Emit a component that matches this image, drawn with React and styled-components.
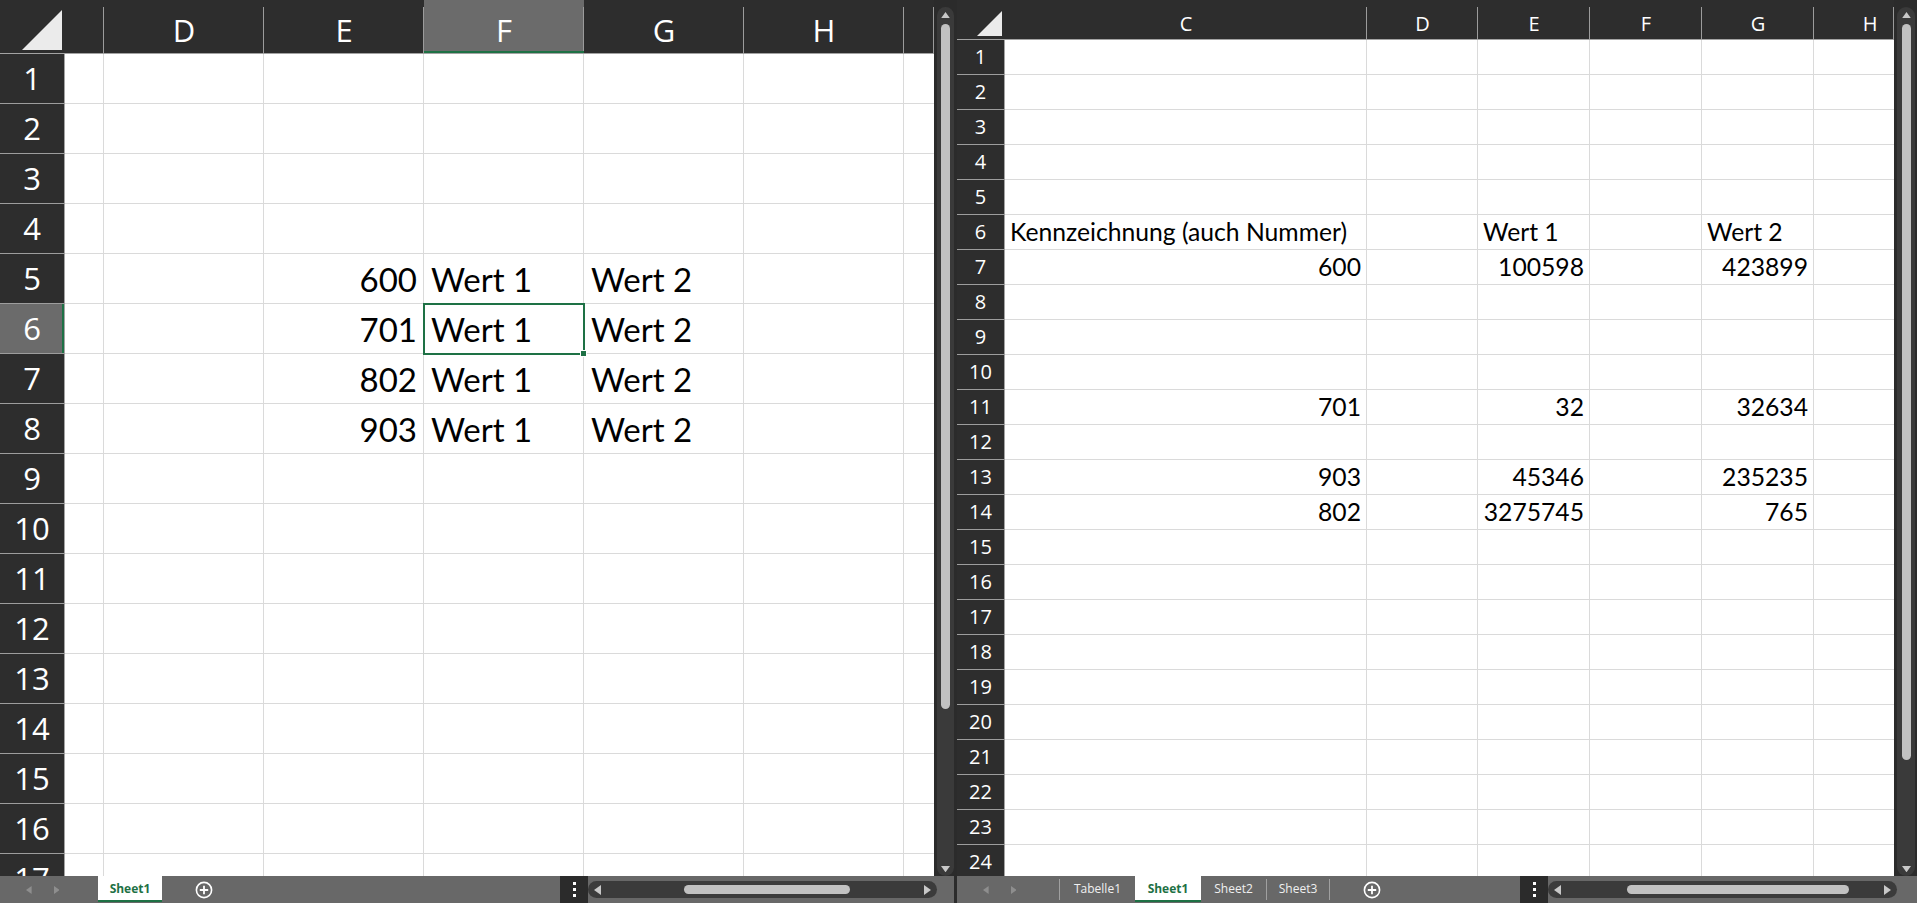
import React from "react"
import styled, { createGlobalStyle, css } from "styled-components"

const GREEN = "#1e7145"
const GRID = "#dadada"
const HEAD = "#2d2d2d"
const HEAD_LINE = "#a3a3a3"
const ACTIVE_HEAD = "#6b6b6b"
const CELL_FONT = `"Lato", "Liberation Sans", sans-serif`
const UI_FONT = `"Open Sans", "Noto Sans", "Liberation Sans", sans-serif`

const GlobalStyle = createGlobalStyle`
  html, body {
    margin: 0;
    padding: 0;
    background: #2b2b2b;
    overflow: hidden;
  }
`

const Window = styled.div`
  display: flex;
  gap: 3px;
  width: 1917px;
  height: 903px;
  background: #2b2b2b;
`

const Pane = styled.section`
  display: flex;
  flex-direction: column;
  flex: none;
  width: ${p => p.$width}px;
  min-height: 0;
`

const PaneBody = styled.div`
  flex: 1;
  display: flex;
  min-height: 0;
`

const Viewport = styled.div`
  flex: 1;
  overflow: hidden;
  background: #fff;
`

const Grid = styled.div`
  display: grid;
  grid-template-columns: ${p => p.$columns};
  grid-template-rows: ${p => p.$rows};
`

const Corner = styled.div`
  display: flex;
  align-items: flex-end;
  justify-content: flex-end;
  padding: 0 3px 3px 0;
  background: ${HEAD};
  border-bottom: 1px solid ${HEAD_LINE};
  box-sizing: border-box;
`

const ColHeader = styled.div`
  display: flex;
  overflow: hidden;
  justify-content: flex-start;
  align-items: center;
  box-sizing: border-box;
  padding-top: ${p => p.$cfg.headPadTop}px;
  background-color: ${p => (p.$active ? ACTIVE_HEAD : HEAD)};
  background-image: linear-gradient(#9b9b9b, #9b9b9b);
  background-size: 1px calc(100% - 7px);
  background-position: right bottom;
  background-repeat: no-repeat;
  border-bottom: 1px solid ${HEAD_LINE};
  box-shadow: ${p => (p.$active ? `inset 0 -2px 0 ${GREEN}` : "none")};
  color: #fff;
  font-family: ${UI_FONT};
  font-size: ${p => p.$cfg.headFont}px;
  line-height: 1;
`

const ColLabel = styled.span`
  flex: none;
  width: ${p => p.$width}px;
  text-align: center;
`

const RowHeader = styled.div`
  display: flex;
  align-items: center;
  justify-content: center;
  box-sizing: border-box;
  background: ${p => (p.$active ? ACTIVE_HEAD : HEAD)};
  border-right: 1px solid ${HEAD_LINE};
  border-bottom: 1px solid #9d9d9d;
  box-shadow: ${p => (p.$active ? `inset -2px 0 0 ${GREEN}` : "none")};
  color: #fff;
  font-family: ${UI_FONT};
  font-size: ${p => p.$cfg.headFont}px;
  line-height: 1;
`

const Cell = styled.div`
  display: flex;
  align-items: flex-end;
  justify-content: ${p => (p.$align === "right" ? "flex-end" : "flex-start")};
  box-sizing: border-box;
  padding: 0 ${p => p.$cfg.padR}px ${p => p.$cfg.padB}px ${p => p.$cfg.padL}px;
  border-right: ${p => (p.$clip === "right" ? "none" : `1px solid ${GRID}`)};
  border-bottom: 1px solid ${GRID};
  color: #000;
  font-family: ${CELL_FONT};
  font-size: ${p => p.$cfg.cellFont}px;
  line-height: 1;
  white-space: nowrap;

  ${p =>
    p.$selected &&
    css`
      position: relative;
      z-index: 1;
      outline: 2px solid ${GREEN};
      outline-offset: -1px;

      &::after {
        content: "";
        position: absolute;
        right: -4px;
        bottom: -4px;
        width: 5px;
        height: 5px;
        background: ${GREEN};
        border: 1px solid #fff;
      }
    `}
`

const VScroll = styled.div`
  flex: none;
  display: flex;
  box-sizing: border-box;
  width: ${p => p.$width}px;
  padding: 7px ${p => p.$padRight}px 0 3px;
  background: #2b2b2b;
`

const VTrack = styled.div`
  flex: 1;
  display: flex;
  flex-direction: column;
  align-items: center;
  padding: 5px 0 4px;
  background: #3a3a3a;
  border-radius: 9px;
`

const VThumb = styled.div`
  width: 9px;
  height: ${p => p.$size}px;
  margin-top: 6px;
  border-radius: 5px;
  background: #c1c1c1;
`

const Filler = styled.div`
  flex: 1;
`

const BottomBar = styled.div`
  flex: none;
  display: flex;
  align-items: flex-start;
  height: 27px;
  background: #686868;
  font-family: ${UI_FONT};
  font-size: 12px;
`

const NavArrows = styled.div`
  flex: none;
  display: flex;
  align-items: center;
  gap: 22px;
  box-sizing: border-box;
  width: ${p => p.$width}px;
  height: 27px;
  padding-left: 26px;
`

const TabSep = styled.span`
  flex: none;
  width: 1px;
  height: 21px;
  margin-top: 3px;
  background: #a0a0a0;
`

const Tab = styled.div`
  flex: none;
  display: flex;
  align-items: center;
  justify-content: center;
  box-sizing: border-box;
  width: ${p => p.$width}px;
  height: 24px;
  color: ${p => (p.$active ? GREEN : "#f0f0f0")};
  font-weight: ${p => (p.$active ? 700 : 400)};
  ${p =>
    p.$active &&
    css`
      height: 26px;
      background: #fff;
      border-bottom: 2px solid ${GREEN};
    `}
`

const AddSheet = styled.div`
  flex: none;
  display: flex;
  align-items: center;
  height: 27px;
  margin-left: ${p => p.$offset}px;
`

const DotsButton = styled.div`
  flex: none;
  display: flex;
  flex-direction: column;
  align-items: center;
  justify-content: center;
  gap: 3px;
  width: 28px;
  height: 27px;
  background: #2b2b2b;

  span {
    width: 3px;
    height: 3px;
    background: #fff;
  }
`

const HTrack = styled.div`
  flex: none;
  display: flex;
  align-items: center;
  box-sizing: border-box;
  width: 349px;
  height: 17px;
  margin-top: 5px;
  padding: 0 6px;
  background: #3b3b3b;
  border-radius: 9px;
`

const HThumb = styled.div`
  flex: none;
  width: ${p => p.$size}px;
  height: 9px;
  margin-left: ${p => p.$offset}px;
  border-radius: 5px;
  background: #c1c1c1;
`

const EndGap = styled.div`
  flex: none;
  width: ${p => p.$width}px;
`

const Triangle = ({ dir, size = 8, color = "#c8c8c8" }) => {
  const pts = {
    up: `0,${size * 0.7} ${size},${size * 0.7} ${size / 2},0`,
    down: `0,0 ${size},0 ${size / 2},${size * 0.7}`,
    left: `${size * 0.7},0 ${size * 0.7},${size} 0,${size / 2}`,
    right: `0,0 0,${size} ${size * 0.7},${size / 2}`,
  }[dir]
  const vertical = dir === "up" || dir === "down"
  return (
    <svg width={vertical ? size : size * 0.7} height={vertical ? size * 0.7 : size}>
      <polygon points={pts} fill={color} />
    </svg>
  )
}

const CornerMark = ({ size }) => (
  <svg width={size} height={size}>
    <polygon points={`${size},0 ${size},${size} 0,${size}`} fill="#ebebeb" />
  </svg>
)

const PlusIcon = () => (
  <svg width="18" height="18" viewBox="0 0 18 18">
    <circle cx="9" cy="9" r="7.6" fill="none" stroke="#fff" strokeWidth="1.6" />
    <path d="M9 4.8v8.4M4.8 9h8.4" stroke="#fff" strokeWidth="1.8" />
  </svg>
)

const Sheet = ({ cfg, columns, rows, cells, selected }) => {
  const template = [cfg.rowHeaderW, ...columns.map(c => c.width)].map(w => `${w}px`).join(" ")
  const rowTemplate = `${cfg.headerH}px repeat(${rows}, ${cfg.rowH}px)`
  const selCol = selected ? selected[0] : null
  const selRow = selected ? Number(selected.slice(1)) : null

  return (
    <Grid $columns={template} $rows={rowTemplate}>
      <Corner>
        <CornerMark size={cfg.corner} />
      </Corner>
      {columns.map(c => (
        <ColHeader key={c.id} $cfg={cfg} $active={c.id === selCol}>
          {!c.hideLabel && <ColLabel $width={c.full || c.width}>{c.id}</ColLabel>}
        </ColHeader>
      ))}
      {Array.from({ length: rows }, (_, i) => {
        const r = i + 1
        return (
          <React.Fragment key={r}>
            <RowHeader $cfg={cfg} $active={r === selRow}>
              {r}
            </RowHeader>
            {columns.map(c => {
              const v = cells[c.id + r]
              return (
                <Cell
                  key={c.id}
                  $cfg={cfg}
                  $clip={c.clip}
                  $align={typeof v === "number" ? "right" : "left"}
                  $selected={c.id + r === selected}
                >
                  {v}
                </Cell>
              )
            })}
          </React.Fragment>
        )
      })}
    </Grid>
  )
}

const SheetTabs = ({ tabs, navWidth, navSep }) => (
  <>
    <NavArrows $width={navWidth}>
      <Triangle dir="left" size={8} color="#8e8e8e" />
      <Triangle dir="right" size={8} color="#8e8e8e" />
    </NavArrows>
    {navSep && <TabSep />}
    {tabs.map((t, i) => {
      const next = tabs[i + 1]
      const showSep = !t.active && (!next || !next.active)
      return (
        <React.Fragment key={t.name}>
          <Tab $width={t.width} $active={t.active}>
            {t.name}
          </Tab>
          {showSep && <TabSep />}
        </React.Fragment>
      )
    })}
  </>
)

const leftCfg = {
  rowHeaderW: 65,
  headerH: 54,
  rowH: 50,
  headFont: 31,
  headPadTop: 8,
  cellFont: 33,
  padL: 7,
  padR: 6,
  padB: 7,
  corner: 40,
}

const rightCfg = {
  rowHeaderW: 48,
  headerH: 40,
  rowH: 35,
  headFont: 20,
  headPadTop: 8,
  cellFont: 24.7,
  padL: 5,
  padR: 5,
  padB: 4,
  corner: 25,
}

// partially scrolled-in columns: their header letter sits outside the view
const leftColumns = [
  { id: "C", width: 39, hideLabel: true },
  { id: "D", width: 160 },
  { id: "E", width: 160 },
  { id: "F", width: 160 },
  { id: "G", width: 160 },
  { id: "H", width: 160 },
  { id: "I", width: 30, hideLabel: true, clip: "right" },
]

const rightColumns = [
  { id: "C", width: 362 },
  { id: "D", width: 111 },
  { id: "E", width: 112 },
  { id: "F", width: 112 },
  { id: "G", width: 112 },
  { id: "H", width: 80, full: 112, clip: "right" },
]

const leftCells = {
  E5: 600, F5: "Wert 1", G5: "Wert 2",
  E6: 701, F6: "Wert 1", G6: "Wert 2",
  E7: 802, F7: "Wert 1", G7: "Wert 2",
  E8: 903, F8: "Wert 1", G8: "Wert 2",
}

const rightCells = {
  C6: "Kennzeichnung (auch Nummer)", E6: "Wert 1", G6: "Wert 2",
  C7: 600, E7: 100598, G7: 423899,
  C11: 701, E11: 32, G11: 32634,
  C13: 903, E13: 45346, G13: 235235,
  C14: 802, E14: 3275745, G14: 765,
}

const ScrollBarV = ({ width, padRight, thumb }) => (
  <VScroll $width={width} $padRight={padRight}>
    <VTrack>
      <Triangle dir="up" size={9} />
      <VThumb $size={thumb} />
      <Filler />
      <Triangle dir="down" size={9} />
    </VTrack>
  </VScroll>
)

const ScrollBarH = ({ offset, thumb }) => (
  <HTrack>
    <Triangle dir="left" size={10} />
    <HThumb $offset={offset} $size={thumb} />
    <Filler />
    <Triangle dir="right" size={10} />
  </HTrack>
)

const App = () => (
  <>
    <GlobalStyle />
    <Window>
      <Pane $width={954}>
        <PaneBody>
          <Viewport>
            <Sheet cfg={leftCfg} columns={leftColumns} rows={17} cells={leftCells} selected="F6" />
          </Viewport>
          <ScrollBarV width={20} padRight={0} thumb={685} />
        </PaneBody>
        <BottomBar>
          <SheetTabs navWidth={98} tabs={[{ name: "Sheet1", width: 64, active: true }]} />
          <AddSheet $offset={33}>
            <PlusIcon />
          </AddSheet>
          <Filler />
          <DotsButton>
            <span />
            <span />
            <span />
          </DotsButton>
          <ScrollBarH offset={83} thumb={166} />
          <EndGap $width={17} />
        </BottomBar>
      </Pane>

      <Pane $width={960}>
        <PaneBody>
          <Viewport>
            <Sheet cfg={rightCfg} columns={rightColumns} rows={24} cells={rightCells} />
          </Viewport>
          <ScrollBarV width={23} padRight={2} thumb={736} />
        </PaneBody>
        <BottomBar>
          <SheetTabs
            navWidth={102}
            navSep
            tabs={[
              { name: "Tabelle1", width: 75 },
              { name: "Sheet1", width: 66, active: true },
              { name: "Sheet2", width: 65 },
              { name: "Sheet3", width: 62 },
            ]}
          />
          <AddSheet $offset={33}>
            <PlusIcon />
          </AddSheet>
          <Filler />
          <DotsButton>
            <span />
            <span />
            <span />
          </DotsButton>
          <ScrollBarH offset={66} thumb={222} />
          <EndGap $width={20} />
        </BottomBar>
      </Pane>
    </Window>
  </>
)

export default App
